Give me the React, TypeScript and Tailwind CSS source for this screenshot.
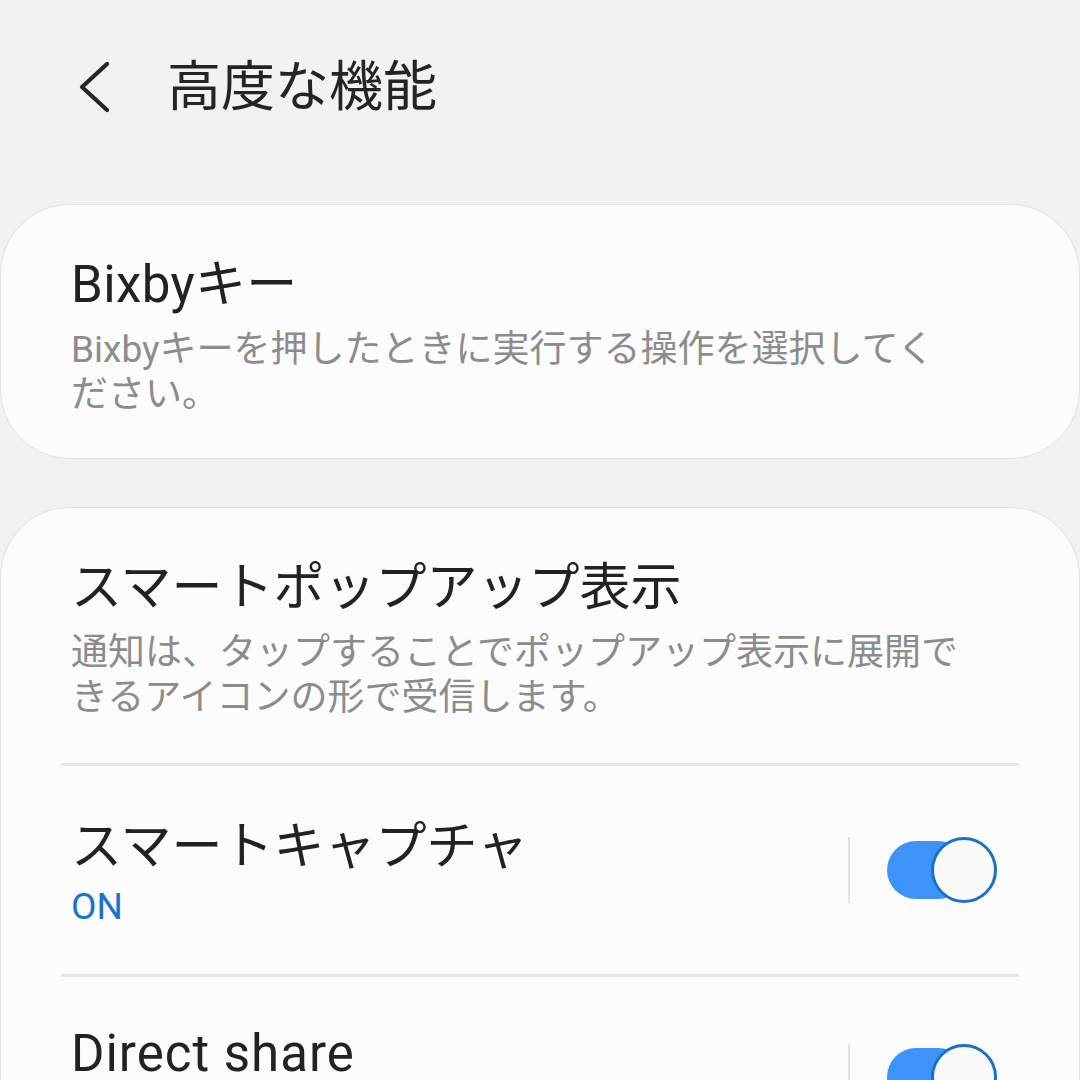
const font = "font-['Roboto','Noto_Sans_CJK_JP',sans-serif]";

function Toggle() {
  return (
    <div className="flex items-center mb-[6px]">
      <div className="w-[2px] h-[66px] bg-[#e2e2e2]" />
      <div className="relative w-[110px] h-[66px] ml-[37px]">
        <div className="absolute left-0 top-[4px] w-[80px] h-[58px] rounded-full bg-[#3e93fa]" />
        <div className="absolute right-0 top-0 w-[66px] h-[66px] rounded-full border-[3px] border-[#1b70c9] bg-[#fafafa]" />
      </div>
    </div>
  );
}

function Divider() {
  return <div className="h-[3px] bg-[#e7e7e7]" />;
}

export default function App() {
  return (
    <div className={`w-[1080px] h-[1080px] overflow-hidden bg-[#f2f2f2] ${font}`}>
      {/* Header */}
      <div className="h-[176px] flex items-center pl-[78px]">
        <svg width="36" height="56" viewBox="0 0 36 56" className="shrink-0">
          <path d="M29 12 L4 35 L29 58" transform="translate(0 -8)" fill="none" stroke="#262626" strokeWidth="4.2" strokeLinecap="round" strokeLinejoin="round" />
        </svg>
        <h1 className="ml-[53px] text-[54px] leading-[60px] text-[#242424] font-normal">高度な機能</h1>
      </div>

      <div className="flex flex-col gap-[48px] mt-[28px]">
        {/* Bixby card */}
        <div className="rounded-[70px] border border-[#e2e2e2] bg-[#fcfcfc] px-[60px]">
          <div className="pt-[50px] pb-[41px] px-[10px]">
            <div className="text-[51px] leading-[60px] text-[#222] tracking-[0.4px]">Bixbyキー</div>
            <div className="mt-[12px] text-[37px] leading-[45px] text-[#8c8c8c]">
              Bixbyキーを押したときに実行する操作を選択してく
              <br />
              ださい。
            </div>
          </div>
        </div>

        {/* Features card */}
        <div className="rounded-[70px] border border-[#e2e2e2] bg-[#fcfcfc] px-[60px]">
          <div className="pt-[50px] pb-[43px] px-[10px]">
            <div className="text-[51px] leading-[60px] text-[#222]">スマートポップアップ表示</div>
            <div className="mt-[12px] text-[37px] leading-[45px] text-[#8c8c8c]">
              通知は、タップすることでポップアップ表示に展開で
              <br />
              きるアイコンの形で受信します。
            </div>
          </div>
          <Divider />
          <div className="flex items-center justify-between pt-[51px] pb-[45px] pl-[10px] pr-[22px]">
            <div>
              <div className="text-[51px] leading-[60px] text-[#222]">スマートキャプチャ</div>
              <div className="mt-[7px] text-[37px] leading-[45px] text-[#1a73cf]">ON</div>
            </div>
            <Toggle />
          </div>
          <Divider />
          <div className="flex items-center justify-between pt-[47px] pb-[45px] pl-[10px] pr-[22px]">
            <div>
              <div className="text-[51px] leading-[60px] text-[#222] tracking-[1px]">Direct share</div>
              <div className="mt-[7px] text-[37px] leading-[45px] text-[#1a73cf]">ON</div>
            </div>
            <Toggle />
          </div>
        </div>
      </div>
    </div>
  );
}
